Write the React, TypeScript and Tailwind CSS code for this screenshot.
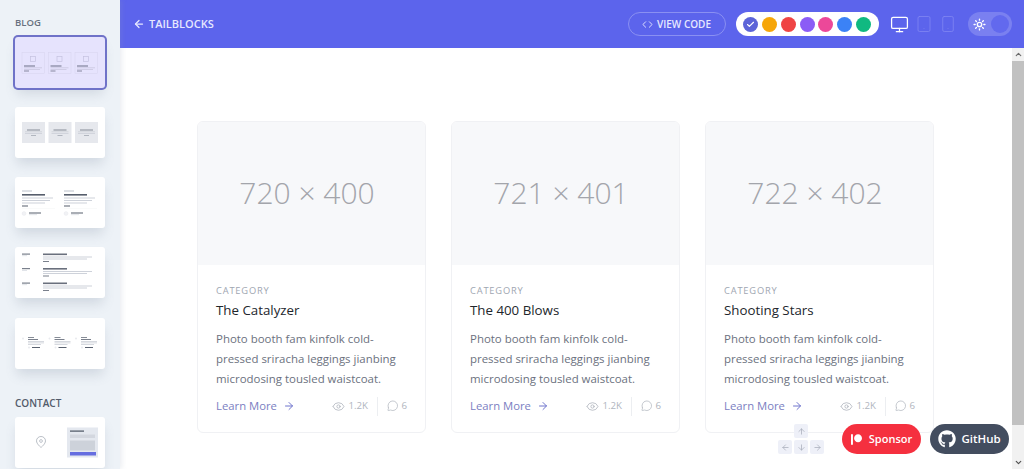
import React from 'react';
import { ArrowLeft, ArrowRight, ArrowUp, ArrowDown, Eye, MessageCircle, Code, Check, Monitor, Tablet, Smartphone, Sun, ChevronUp, ChevronDown } from 'lucide-react';
import { FaGithub, FaPatreon } from 'react-icons/fa';

const font = 'font-["Open_Sans","Noto_Sans",sans-serif]';

const posts = [
  { size: '720 × 400', title: 'The Catalyzer' },
  { size: '721 × 401', title: 'The 400 Blows' },
  { size: '722 × 402', title: 'Shooting Stars' },
];

const swatches = ['bg-[#f6a609]', 'bg-[#ef4444]', 'bg-[#8b5cf6]', 'bg-[#ec4899]', 'bg-[#3b82f6]', 'bg-[#10b981]'];

// small wireframes inside the sidebar thumbnails
const ThumbA = () => (
  <svg viewBox="0 0 90 50" className="w-full h-full">
    {[7, 33.5, 60].map((x) => (
      <g key={x}>
        <rect x={x} y="15" width="22.5" height="21" fill="none" stroke="#d6d3ee" strokeWidth="0.5" />
        <rect x={x + 8.500} y="19" width="5" height="5" fill="none" stroke="#c4c1de" strokeWidth="0.7" />
        <rect x={x + 2} y="28" width="11" height="1" fill="#6d7088" />
        <rect x={x + 2} y="30" width="18" height="0.7" fill="#c4c2da" />
        <rect x={x + 2} y="31.500" width="16" height="0.7" fill="#c4c2da" />
        <rect x={x + 2} y="33" width="5" height="1" fill="#85879f" />
      </g>
    ))}
  </svg>
);

const ThumbB = () => (
  <svg viewBox="0 0 90 50" className="w-full h-full">
    {[7, 33.5, 60].map((x) => (
      <g key={x}>
        <rect x={x} y="14.500" width="23" height="21" fill="#e6e8ed" />
        <rect x={x + 5} y="22" width="13" height="1" fill="#858b97" />
        <rect x={x + 3} y="24" width="17" height="0.7" fill="#c8ccd4" />
        <rect x={x + 3} y="25.500" width="17" height="0.7" fill="#c8ccd4" />
        <rect x={x + 9} y="27.500" width="5" height="0.8" fill="#a4a9b3" />
      </g>
    ))}
  </svg>
);

const ThumbC = () => (
  <svg viewBox="0 0 90 50" className="w-full h-full">
    {[7, 49].map((x) => (
      <g key={x}>
        <rect x={x} y="13" width="10" height="1" fill="#bcc1cb" />
        <rect x={x} y="16.500" width="23" height="1.600" fill="#565e6c" />
        <rect x={x} y="20" width="31" height="1" fill="#ced2da" />
        <rect x={x} y="22.500" width="28" height="1" fill="#ced2da" />
        <rect x={x} y="25" width="23" height="1" fill="#ced2da" />
        <rect x={x} y="28" width="6" height="1" fill="#565e6c" />
        <rect x={x} y="31" width="33" height="0.4" fill="#f0f1f3" />
        <circle cx={x + 2} cy="36" r="2" fill="#f1f2f5" stroke="#dfe1e6" strokeWidth="0.3" />
        <rect x={x + 7} y="35" width="12" height="1" fill="#565e6c" />
        <rect x={x + 7} y="37" width="8" height="0.6" fill="#ced2da" />
      </g>
    ))}
  </svg>
);

const ThumbD = () => (
  <svg viewBox="0 0 90 50" className="w-full h-full">
    {[6, 20.500, 35].map((y) => (
      <g key={y}>
        <rect x="7" y={y} width="8" height="1.200" fill="#7a808c" />
        <rect x="7" y={y + 2} width="5" height="0.6" fill="#ced2da" />
        <rect x="28" y={y} width="24" height="1.600" fill="#6a707d" />
        <rect x="28" y={y + 3} width="49" height="1" fill="#ced2da" />
        <rect x="28" y={y + 5} width="44" height="1" fill="#ced2da" />
        <rect x="28" y={y + 7.500} width="6" height="1" fill="#7a808c" />
      </g>
    ))}
  </svg>
);

const ThumbE = () => (
  <svg viewBox="0 0 90 50" className="w-full h-full">
    {[7, 33.5, 60].map((x) => (
      <g key={x}>
        <circle cx={x + 1} cy="20" r="1" fill="#e8eaee" />
        <rect x={x + 6} y="18.500" width="6" height="0.9" fill="#7a808c" />
        <rect x={x + 6} y="20.500" width="10" height="1" fill="#7a808c" />
        <rect x={x + 6} y="22.500" width="16" height="0.8" fill="#ccd0d8" />
        <rect x={x + 6} y="24" width="16" height="0.8" fill="#ccd0d8" />
        <rect x={x + 6} y="25.500" width="13" height="0.8" fill="#ccd0d8" />
        <circle cx={x + 7} cy="29" r="1" fill="#e8eaee" />
        <rect x={x + 10} y="28.500" width="8" height="1" fill="#5a6270" />
      </g>
    ))}
  </svg>
);

const ThumbContact = () => (
  <svg viewBox="0 0 90 50" className="w-full h-full">
    <path d="M26 19c-2.600 0-4.500 2-4.500 4.400 0 3 4.500 6.600 4.500 6.600s4.500-3.600 4.500-6.600C30.500 21 28.600 19 26 19z" fill="none" stroke="#a8aeb8" strokeWidth="0.8" />
    <circle cx="26" cy="23.500" r="1.400" fill="none" stroke="#a8aeb8" strokeWidth="0.7" />
    <rect x="52" y="10" width="31" height="30" fill="#e4e8ef" />
    <rect x="55" y="13" width="14" height="1.200" fill="#4b5563" />
    <rect x="55" y="17" width="25" height="3.500" fill="#d3d7df" />
    <rect x="55" y="23" width="25" height="10" fill="#cdd2da" />
    <rect x="55" y="34.500" width="26" height="3.500" fill="#666ee0" />
  </svg>
);

const Thumb = ({ children, active }: { children: React.ReactNode; active?: boolean }) => (
  <div
    className={`w-[90px] h-[51px] shrink-0 rounded-[3px] shadow-[0_8px_12px_-2px_rgba(100,116,139,0.2)] ${
      active ? 'bg-[#e6e3fd] ring-2 ring-[#6f72c8]' : 'bg-white'
    }`}
  >
    {children}
  </div>
);

const Card = ({ size, title }: { size: string; title: string }) => (
  <div className="w-[229px] h-[312px] shrink-0 border border-[#f0f1f4] rounded-md overflow-hidden bg-white">
    <div className="h-[143px] pr-[9px] pb-[2px] bg-[#f7f8fa] flex items-center justify-center text-[30px] font-light text-[#a3a5ab]">{size}</div>
    <div className="px-[18px] pt-[19px]">
      <div className="text-[9.300px] leading-[14px] tracking-[0.09em] font-medium text-[#a0a6b1]">CATEGORY</div>
      <h2 className="mt-[2px] text-[13.300px] leading-[20px] font-medium text-[#22262c]">{title}</h2>
      <p className="mt-[9px] text-[11.450px] leading-[20px] text-[#6b717e]">
        Photo booth fam kinfolk cold-
        <br />
        pressed sriracha leggings jianbing
        <br />
        microdosing tousled waistcoat.
      </p>
      <div className="mt-[7px] flex items-center h-[20px]">
        <span className="text-[11.300px] text-[#7b80c2]">Learn More</span>
        <ArrowRight className="ml-[6px] text-[#6f74cc]" size={12} strokeWidth={2} />
        <div className="ml-auto flex items-center text-[9.700px] text-[#b0b5be]">
          <Eye size={13} strokeWidth={1.500} className="mr-[3px]" />
          <span>1.2K</span>
          <span className="w-px h-[19px] bg-[#eceef1] mx-[9px]" />
          <MessageCircle size={11.500} strokeWidth={1.500} className="mr-[3px]" />
          <span>6</span>
        </div>
      </div>
    </div>
  </div>
);

const KeyCap = ({ children }: { children: React.ReactNode }) => (
  <div className="w-[14px] h-[14px] rounded-[2px] bg-[#eef0f8] flex items-center justify-center text-[#a8adbb]">{children}</div>
);

export default function App() {
  return (
    <div className={`relative w-[1024px] h-[469px] overflow-hidden flex bg-white ${font}`}>
      <aside className="w-[120px] shrink-0 h-full bg-[#edf2f7] shadow-[2px_0_5px_rgba(148,163,184,0.18)] px-[15px] pt-[16px] z-10 overflow-hidden">
        <div className="text-[9.500px] leading-[14px] font-semibold text-[#68717f] mb-[6.500px]">BLOG</div>
        <div className="flex flex-col gap-[19.250px]">
          <Thumb active><ThumbA /></Thumb>
          <Thumb><ThumbB /></Thumb>
          <Thumb><ThumbC /></Thumb>
          <Thumb><ThumbD /></Thumb>
          <Thumb><ThumbE /></Thumb>
        </div>
        <div className="mt-[27.500px] text-[10px] leading-[14px] font-semibold text-[#525b6a] mb-[7px]">CONTACT</div>
        <Thumb><ThumbContact /></Thumb>
      </aside>

      <div className="flex-1 min-w-0 flex flex-col">
        <header className="h-[48px] shrink-0 bg-[#5c64ec] flex items-center pl-[13px] pr-[12px] text-white">
          <ArrowLeft size={12} strokeWidth={2.500} className="text-[#e6e8ff]" />
          <span className="ml-[4px] text-[11px] font-semibold text-[#e6e8ff]">TAILBLOCKS</span>
          <div className="ml-auto h-[24px] w-[98px] border border-[#8a90f2] rounded-full flex items-center justify-center text-[10px] font-semibold text-[#e6e8ff]">
            <Code size={11} className="mr-[4px]" />
            VIEW CODE
          </div>
          <div className="ml-[10px] h-[24px] w-[143px] bg-white rounded-full flex items-center justify-center gap-[3.800px]">
            <span className="w-[15px] h-[15px] rounded-full bg-[#5c64d8] flex items-center justify-center">
              <Check size={9} strokeWidth={3} className="text-white" />
            </span>
            {swatches.map((c) => (
              <span key={c} className={`w-[15px] h-[15px] rounded-full ${c}`} />
            ))}
          </div>
          <Monitor size={19} strokeWidth={1.600} className="ml-[11px] text-white" />
          <Tablet size={18} strokeWidth={1.100} className="ml-[6px] text-[#7f85f2]" />
          <Smartphone size={18} strokeWidth={1.100} className="ml-[6px] text-[#7f85f2]" />
          <div className="ml-[11.500px] w-[44px] h-[24px] rounded-full bg-[#7a80f0] flex items-center pl-[5px] pr-[3px] justify-between">
            <Sun size={13} strokeWidth={2.500} className="text-white" />
            <span className="w-[18px] h-[18px] rounded-full bg-[#6269ee]" />
          </div>
        </header>

        <div className="flex-1 min-h-0 flex">
          <main className="flex-1 min-w-0 pl-[77px] pt-[73px] flex gap-[25px]">
            {posts.map((p) => (
              <Card key={p.title} {...p} />
            ))}
          </main>
          <div className="w-[12px] shrink-0 bg-[#f1f1f1] flex flex-col items-center">
            <ChevronUp size={9} strokeWidth={3} className="text-[#6b6b6b] mt-[2px]" />
            <div className="w-full h-[364px] mt-[2px] bg-[#c1c1c1]" />
            <ChevronDown size={9} strokeWidth={3} className="text-[#505050] mt-auto mb-[2px]" />
          </div>
        </div>
      </div>

      {/* keyboard hint + floating buttons sit over the page */}
      <div className="absolute left-[778px] top-[424px] flex flex-col items-center gap-[2px]">
        <KeyCap><ArrowUp size={9} /></KeyCap>
        <div className="flex gap-[2px]">
          <KeyCap><ArrowLeft size={9} /></KeyCap>
          <KeyCap><ArrowDown size={9} /></KeyCap>
          <KeyCap><ArrowRight size={9} /></KeyCap>
        </div>
      </div>
      <div className="absolute left-[842px] top-[424px] flex gap-[9px]">
        <div className="w-[79px] h-[30px] rounded-full bg-[#f5303f] flex items-center justify-center text-white text-[11px] font-semibold">
          <FaPatreon size={11} className="mr-[7px]" />
          Sponsor
        </div>
        <div className="w-[79px] h-[30px] rounded-full bg-[#434d5f] flex items-center justify-center text-white text-[11.500px] font-semibold">
          <FaGithub size={18} className="mr-[5px]" />
          GitHub
        </div>
      </div>
    </div>
  );
}
